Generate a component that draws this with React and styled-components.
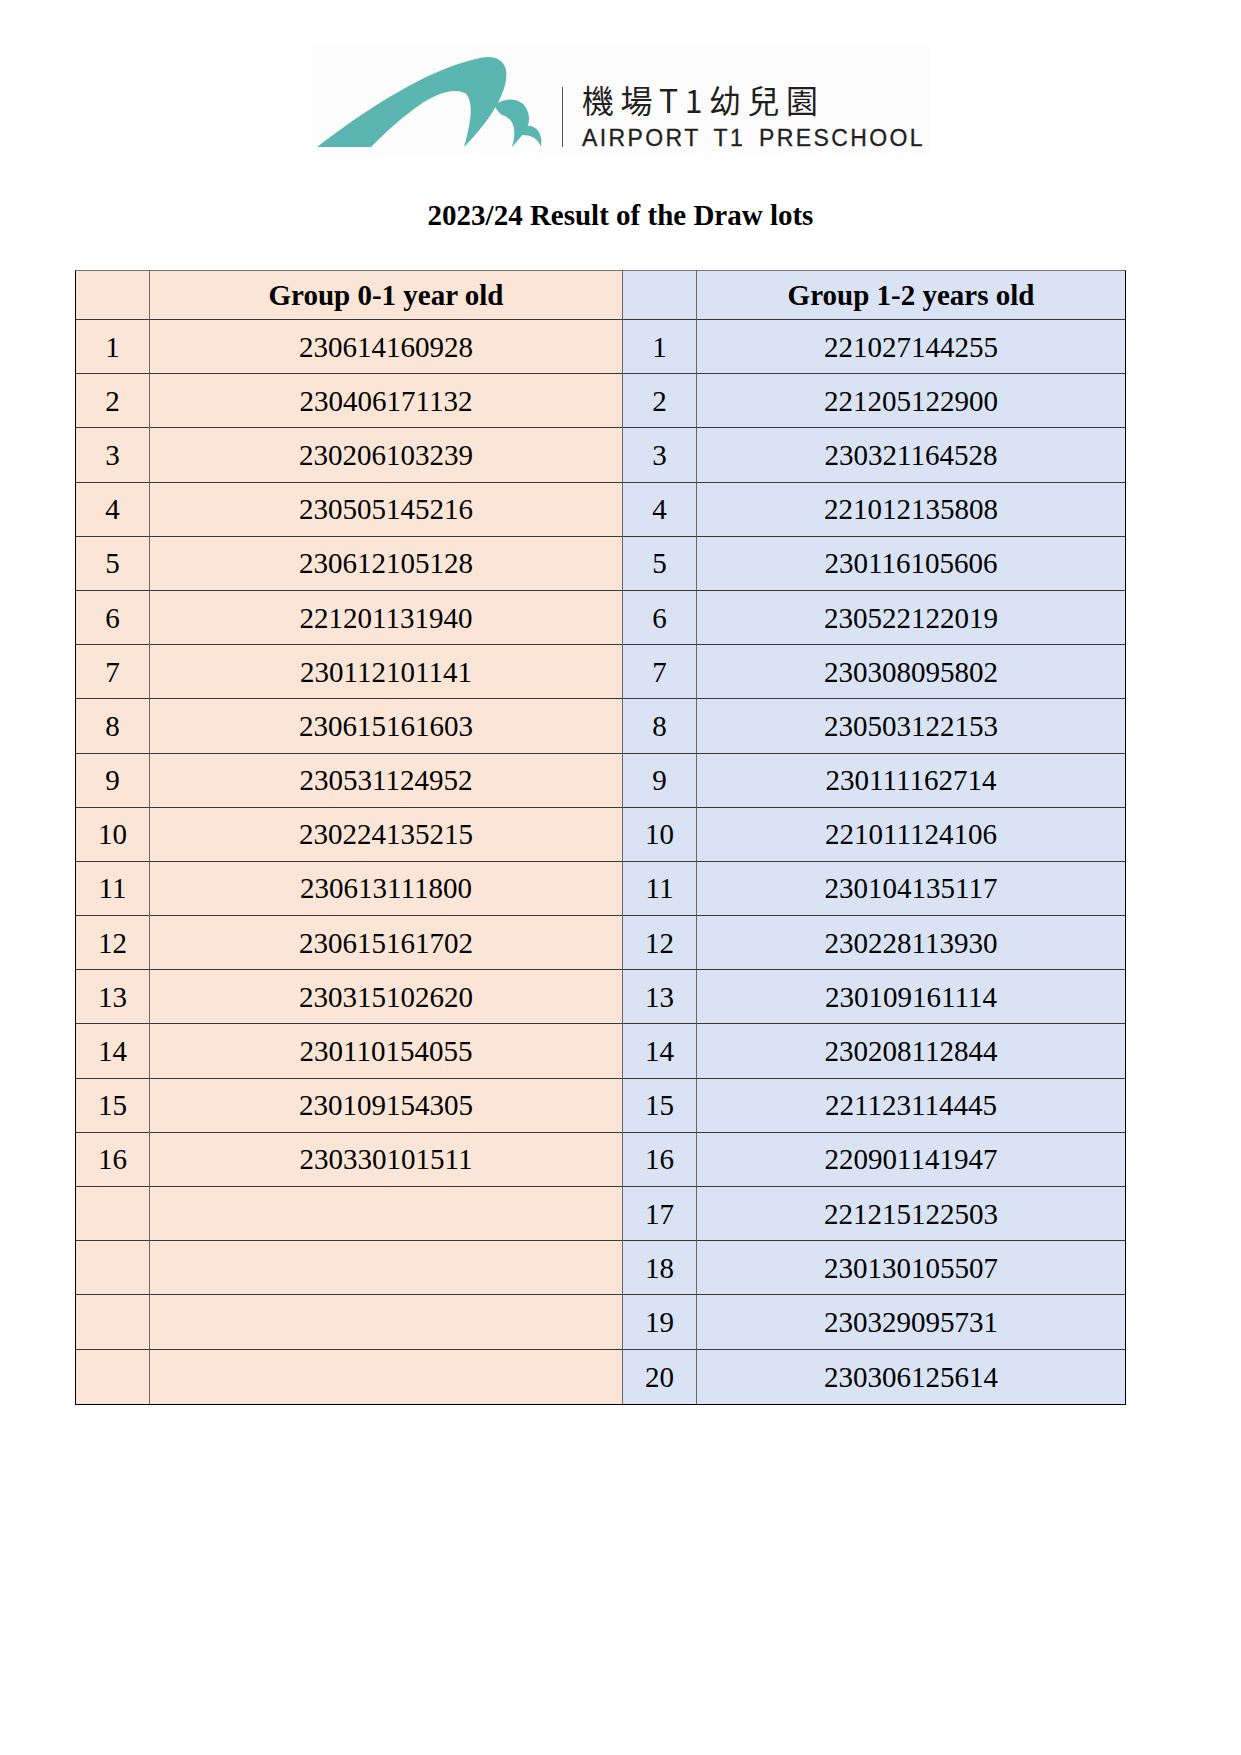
import React from 'react';
import styled, { createGlobalStyle } from 'styled-components';

const GlobalStyle = createGlobalStyle`
  body {
    margin: 0;
    background: #fff;
  }
`;

const leftGroup = [
  '230614160928', '230406171132', '230206103239', '230505145216',
  '230612105128', '221201131940', '230112101141', '230615161603',
  '230531124952', '230224135215', '230613111800', '230615161702',
  '230315102620', '230110154055', '230109154305', '230330101511',
];

const rightGroup = [
  '221027144255', '221205122900', '230321164528', '221012135808',
  '230116105606', '230522122019', '230308095802', '230503122153',
  '230111162714', '221011124106', '230104135117', '230228113930',
  '230109161114', '230208112844', '221123114445', '220901141947',
  '221215122503', '230130105507', '230329095731', '230306125614',
];

const Page = styled.div`
  width: 1241px;
  padding-top: 47px;
  display: flex;
  flex-direction: column;
  align-items: center;
`;

const LogoBox = styled.div`
  width: 617px;
  height: 106px;
  background: #fcfcfc;
  display: flex;
  align-items: stretch;
`;

const Mark = styled.svg`
  width: 235px;
  height: 106px;
  flex: none;
`;

const Divider = styled.div`
  width: 1px;
  margin: 40px 19px 6px 15px;
  background: #555;
`;

const LogoText = styled.div`
  display: flex;
  flex-direction: column;
  padding-top: 36px;
  color: #231f20;
`;

const ChineseName = styled.div`
  font-family: "Noto Sans CJK TC", "Noto Sans", sans-serif;
  font-size: 32px;
  line-height: 32px;
  letter-spacing: 6.5px;
`;

const EnglishName = styled.div`
  margin-top: 12px;
  font-family: "Liberation Sans", Arial, sans-serif;
  font-size: 23px;
  line-height: 23px;
  letter-spacing: 2.4px;
  word-spacing: 5px;
  -webkit-text-stroke: 0.3px #231f20;
`;

const Title = styled.h1`
  margin: 48px 0 0;
  font-family: "Liberation Serif", "Times New Roman", serif;
  font-size: 29px;
  line-height: 29px;
  font-weight: bold;
  color: #000;
`;

const Grid = styled.div`
  align-self: flex-start;
  margin: 40px 0 0 75px;
  display: grid;
  grid-template-columns: 74px 473px 74px 428px;
  grid-template-rows: 49px;
  grid-auto-rows: 54.2px;
  border-top: 1px solid #767171;
  border-left: 1.5px solid #000;
  border-right: 1.5px solid #000;
  border-bottom: 1.5px solid #000;
  font-family: "Liberation Serif", "Times New Roman", serif;
  font-size: 29px;
  color: #000;
`;

const Cell = styled.div`
  display: flex;
  align-items: center;
  justify-content: center;
  background: ${p => (p.tone === 'blue' ? '#dae3f3' : '#fbe5d6')};
  border-right: ${p => (p.last ? 'none' : '1.5px solid #6b6767')};
  border-bottom: ${p => (p.final ? 'none' : '1.5px solid #3a3a3a')};
  font-weight: ${p => (p.head ? 'bold' : 'normal')};
  padding-top: 1px;
`;

// teal wave mark: one large crest and two smaller curls
const LogoMark = () => (
  <Mark viewBox="0 0 235 106">
    <path
      fill="#5bb5b0"
      d="M5,100 C55,62 115,22 168,11 C186,7 197,16 194,33 C191,54 172,80 152,100
         C158,80 163,54 153,46 C130,36 95,64 59,100 Z"
    />
    <path
      fill="#5bb5b0"
      d="M182,58 C196,48 215,51 217,70 C218,83 207,91 200,100
         C204,86 204,72 190,68 C187,66 184,62 182,58 Z"
    />
    <path
      fill="#5bb5b0"
      d="M205,82 C218,74 232,81 229,100 C226,92 220,88 211,88 Z"
    />
  </Mark>
);

export default function App() {
  const rows = Array.from({ length: 20 }, (_, i) => i);
  return (
    <>
      <GlobalStyle />
      <Page>
        <LogoBox>
          <LogoMark />
          <Divider />
          <LogoText>
            <ChineseName>機場T1幼兒園</ChineseName>
            <EnglishName>AIRPORT T1 PRESCHOOL</EnglishName>
          </LogoText>
        </LogoBox>
        <Title>2023/24 Result of the Draw lots</Title>
        <Grid>
          <Cell head />
          <Cell head>Group 0-1 year old</Cell>
          <Cell head tone="blue" />
          <Cell head tone="blue" last>Group 1-2 years old</Cell>
          {rows.map(i => {
            const final = i === rows.length - 1;
            return (
              <React.Fragment key={i}>
                <Cell final={final}>{leftGroup[i] ? i + 1 : ''}</Cell>
                <Cell final={final}>{leftGroup[i] || ''}</Cell>
                <Cell tone="blue" final={final}>{i + 1}</Cell>
                <Cell tone="blue" last final={final}>{rightGroup[i]}</Cell>
              </React.Fragment>
            );
          })}
        </Grid>
      </Page>
    </>
  );
}
